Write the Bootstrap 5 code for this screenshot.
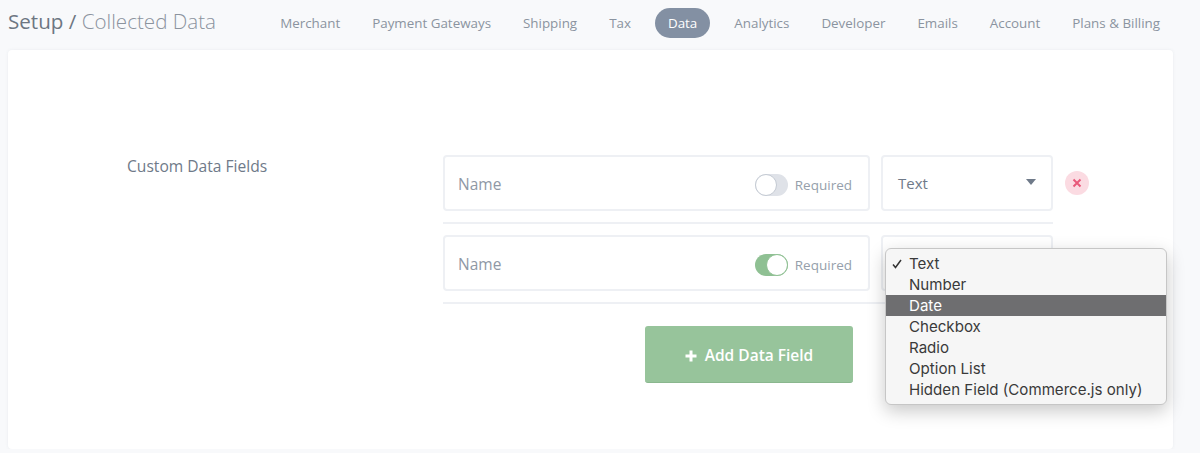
<!DOCTYPE html>
<html lang="en">

<head>
    <meta charset="UTF-8">
    <meta name="viewport" content="width=device-width, initial-scale=1">
    <title>Setup / Collected Data</title>
    <link href="https://cdn.jsdelivr.net/npm/bootstrap@5.3.0/dist/css/bootstrap.min.css" rel="stylesheet">
    <style>
        body { background: #f8f9fb; font-family: "Open Sans", sans-serif; color: #6f7a89; overflow: hidden; }
        .top-bar { height: 50px; padding: 0 28px 4px 8px; }
        .page-title { font-size: 20.6px; font-weight: 300; color: #8b939e; margin: 0 0 3px; }
        .page-title b { font-weight: 400; color: #6d7682; }
        .top-nav { gap: 8px; }
        .top-nav .nav-link { font-size: 13.38px; color: #8b94a0; padding: 0 12px; height: 30px; line-height: 30px; }
        .top-nav .nav-link.active { background: #8390a3; color: #fff; border-radius: 15px; margin: 0 4px; padding: 0 13px; }
        .main-panel { margin: 0 27px 0 8px; height: 399px; background: #fff; border-radius: 4px; box-shadow: 0 0 3px rgba(120,130,150,.12); padding-top: 105px; position: relative; }
        .field-label { width: 435px; padding: 0 0 0 119px; font-size: 15.6px; color: #6f7a89; }
        .field-list { width: 646px; }
        .field-row { gap: 11px; }
        .data-box { height: 56px; background: #fff; border: 2px solid #eef0f4; border-radius: 4px; }
        .name-box { width: 427px; padding: 4px 16px 0 13px; }
        .name-box span.ph { font-size: 15.5px; color: #8f98a5; }
        .type-box { width: 172px; padding: 1px 15px 0 15px; font-size: 15px; color: #6f7a89; }
        .caret-down { width: 0; height: 0; border-left: 5.5px solid transparent; border-right: 5.5px solid transparent; border-top: 6.5px solid #6f7a89; margin-top: -3px; margin-left: auto; }
        .req-text { font-size: 13.5px; color: #969fab; margin-left: 7px; }
        .toggle-pill { width: 33px; height: 22px; border-radius: 11px; background: #dfe2e8; position: relative; }
        .toggle-pill::after { content: ""; position: absolute; top: 0; left: 0; width: 22px; height: 22px; border-radius: 50%; background: #fff; border: 1px solid #c4cad3; }
        .toggle-pill.on { background: #8fc093; }
        .toggle-pill.on::after { left: 11px; border-color: #8fc093; }
        .remove-btn { width: 24px; height: 24px; border-radius: 50%; background: #fbdbe2; margin-left: 1px; }
        .row-rule { width: 610px; height: 2px; background: #eef0f4; margin: 11px 0; }
        .add-btn { width: 208px; height: 57px; margin: 22px 0 0 202px; padding: 3px 0 0; background: #97c49b; border: 0; border-bottom: 1px solid #8ab78e; border-radius: 3px; color: #fff; font-size: 15.5px; font-weight: 600; }
        .add-btn:hover { background: #97c49b; color: #fff; }
        .select-menu { position: absolute; left: 877px; top: 198px; width: 282px; height: 157px; padding: 4px 0; background: #f6f6f6; border: 1px solid #c6c6c6; border-radius: 6px; box-shadow: 0 6px 18px rgba(0,0,0,.22); font-family: Inter, "Liberation Sans", sans-serif; font-size: 15.1px; color: #3a3a3a; z-index: 5; }
        .select-menu div { height: 21px; line-height: 21px; padding-left: 23px; position: relative; white-space: nowrap; }
        .select-menu div.hl { background: #6e6e70; color: #fff; }
        .select-menu svg { position: absolute; left: 6px; top: 6px; }
    </style>
</head>

<body>
    <div class="top-bar d-flex align-items-center justify-content-between">
        <h1 class="page-title"><b>Setup /</b> Collected Data</h1>
        <ul class="nav top-nav">
            <li class="nav-item"><a class="nav-link" href="#">Merchant</a></li>
            <li class="nav-item"><a class="nav-link" href="#">Payment Gateways</a></li>
            <li class="nav-item"><a class="nav-link" href="#">Shipping</a></li>
            <li class="nav-item"><a class="nav-link" href="#">Tax</a></li>
            <li class="nav-item"><a class="nav-link active" href="#">Data</a></li>
            <li class="nav-item"><a class="nav-link" href="#">Analytics</a></li>
            <li class="nav-item"><a class="nav-link" href="#">Developer</a></li>
            <li class="nav-item"><a class="nav-link" href="#">Emails</a></li>
            <li class="nav-item"><a class="nav-link" href="#">Account</a></li>
            <li class="nav-item"><a class="nav-link" href="#">Plans &amp; Billing</a></li>
        </ul>
    </div>

    <div class="main-panel d-flex align-items-start">
        <div class="field-label">Custom Data Fields</div>
        <div class="field-list">
            <div class="field-row d-flex align-items-center">
                <div class="data-box name-box d-flex align-items-center">
                    <span class="ph me-auto">Name</span>
                    <span class="toggle-pill"></span>
                    <span class="req-text">Required</span>
                </div>
                <div class="data-box type-box d-flex align-items-center">
                    <span>Text</span><span class="caret-down"></span>
                </div>
                <div class="remove-btn d-flex align-items-center justify-content-center">
                    <svg width="10" height="10" viewBox="0 0 10 10"><path d="M1.5 1.5l7 7M8.5 1.5l-7 7" stroke="#e8597a" stroke-width="2" fill="none"/></svg>
                </div>
            </div>
            <div class="row-rule"></div>
            <div class="field-row d-flex align-items-center">
                <div class="data-box name-box d-flex align-items-center">
                    <span class="ph me-auto">Name</span>
                    <span class="toggle-pill on"></span>
                    <span class="req-text">Required</span>
                </div>
                <div class="data-box type-box d-flex align-items-center"></div>
            </div>
            <div class="row-rule"></div>
            <button type="button" class="btn add-btn d-flex align-items-center justify-content-center gap-2">
                <svg width="12" height="12" viewBox="0 0 12 12"><path d="M6 .5v11M.5 6h11" stroke="#fff" stroke-width="3" fill="none"/></svg>
                Add Data Field
            </button>
        </div>
        <div class="select-menu">
            <div><svg width="10" height="10" viewBox="0 0 10 10"><path d="M1 5.5l2.5 3L9 1" stroke="#333" stroke-width="1.5" fill="none"/></svg>Text</div>
            <div>Number</div>
            <div class="hl">Date</div>
            <div>Checkbox</div>
            <div>Radio</div>
            <div>Option List</div>
            <div>Hidden Field (Commerce.js only)</div>
        </div>
    </div>
</body>

</html>
